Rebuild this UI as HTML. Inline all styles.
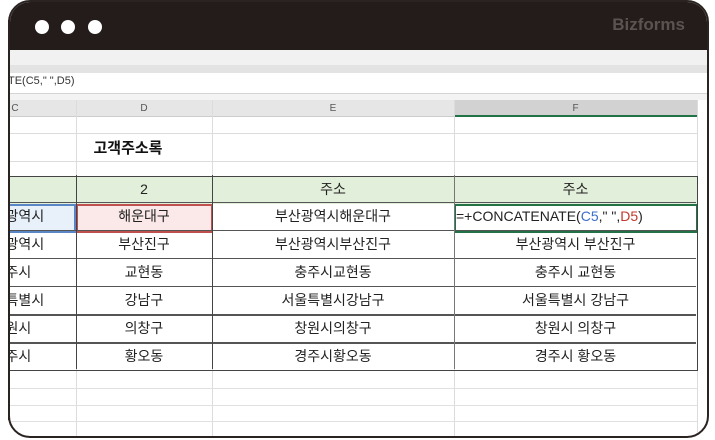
<!DOCTYPE html>
<html><head><meta charset="utf-8"><style>
*{margin:0;padding:0;box-sizing:border-box}
body{width:715px;height:440px;background:#fff;position:relative;overflow:hidden;font-family:"Liberation Sans","Noto Sans CJK KR",sans-serif}
.frame{position:absolute;left:8px;top:0;width:701px;height:438px;border:2px solid #2a2321;border-radius:22px;overflow:hidden;background:#fff}
.top{position:absolute;left:0;top:0;right:0;height:48px;background:#231c1a}
.dot{position:absolute;top:18px;width:14px;height:14px;border-radius:50%;background:#fff}
.logo{position:absolute;right:22px;top:13px;color:#5a5350;font-size:17px;font-weight:bold;letter-spacing:0px}
.abs{position:absolute}
.c{position:absolute;display:flex;align-items:center;justify-content:center;font-size:14px;color:#222;white-space:nowrap}
.h{position:absolute;height:1px;background:#555;left:8px;width:688px}.v{position:absolute;width:1px;background:#444;top:175px;height:194px}
</style></head><body>
<div class="frame">
<div class="top"><div class="dot" style="left:25px"></div><div class="dot" style="left:51px"></div><div class="dot" style="left:78px"></div><div class="logo">Bizforms</div></div>
<div class="abs" style="left:0;top:48px;right:0;height:15px;background:#f1f1f1"></div>
<div class="abs" style="left:0;top:63px;right:0;height:8px;background:#e3e3e3"></div>
<div class="abs" style="left:0;top:71px;right:0;height:21px;background:#fff;border-bottom:1px solid #d4d4d4"></div>
<div class="abs" style="left:-2px;top:73px;font-size:11px;color:#333">TE(C5," ",D5)</div>
<div class="abs" style="left:0;top:92px;right:0;height:6px;background:#f3f3f3"></div>
<div class="abs" style="left:0;top:98px;width:687px;height:17px;background:#e6e6e6;border-bottom:1px solid #ccc"></div>
<div class="abs" style="left:444px;top:98px;width:243px;height:17px;background:#d2d2d2;border-bottom:2px solid #217346"></div>
<div class="c" style="left:0;top:98px;width:10px;height:17px;font-size:10px;color:#555">C</div>
<div class="c" style="left:66px;top:98px;width:136px;height:17px;font-size:10px;color:#555">D</div>
<div class="c" style="left:202px;top:98px;width:242px;height:17px;font-size:10px;color:#555">E</div>
<div class="c" style="left:444px;top:98px;width:243px;height:17px;font-size:10px;color:#555">F</div>
<div class="abs" style="left:66px;top:98px;width:1px;height:340px;background:#dcdcdc"></div>
<div class="abs" style="left:202px;top:98px;width:1px;height:340px;background:#dcdcdc"></div>
<div class="abs" style="left:444px;top:98px;width:1px;height:340px;background:#dcdcdc"></div>
<div class="abs" style="left:687px;top:98px;width:1px;height:340px;background:#dcdcdc"></div>
<div class="abs" style="left:0;top:131px;width:687px;height:1px;background:#dcdcdc"></div>
<div class="abs" style="left:0;top:159px;width:687px;height:1px;background:#dcdcdc"></div>
<div class="abs" style="left:0;top:386px;width:687px;height:1px;background:#e0e0e0"></div>
<div class="abs" style="left:0;top:403px;width:687px;height:1px;background:#e0e0e0"></div>
<div class="abs" style="left:0;top:419px;width:687px;height:1px;background:#e0e0e0"></div>
<div class="c" style="left:68px;top:133px;width:100px;height:24px;font-weight:bold;font-size:15px;color:#111">고객주소록</div>
<div class="abs" style="left:0;top:175px;width:687px;height:27px;background:#e2efda"></div>
<div class="abs" style="left:0;top:202px;width:66px;height:29px;background:#e8f0fa;border:2px solid #5b86c5;border-left:none"></div>
<div class="abs" style="left:66px;top:202px;width:137px;height:29px;background:#fbe8e8;border:2px solid #c0504d"></div>
<div class="abs" style="left:444px;top:202px;width:244px;height:29px;border:2px solid #217346"></div>
<div class="abs" style="left:0;top:174px;width:688px;height:195px;border:1px solid #444;border-left:none;pointer-events:none"></div>
</div>
<div class="h" style="top:202px"></div><div class="h" style="top:230px"></div><div class="h" style="top:258px"></div><div class="h" style="top:286px"></div><div class="h" style="top:314px;height:2px"></div><div class="h" style="top:342px;height:2px"></div>
<div class="v" style="left:76px"></div><div class="v" style="left:212px"></div><div class="v" style="left:454px;background:#777"></div>
<div class="c" style="left:0;top:176px;width:12px;height:26px">)</div>
<div class="c" style="left:76px;top:176px;width:136px;height:26px">2</div>
<div class="c" style="left:212px;top:176px;width:242px;height:26px">주소</div>
<div class="c" style="left:454px;top:176px;width:243px;height:26px">주소</div>

<div class="c" style="left:-52px;top:202px;width:128px;height:28px">부산광역시</div>
<div class="c" style="left:76px;top:202px;width:136px;height:28px">해운대구</div>
<div class="c" style="left:212px;top:202px;width:242px;height:28px">부산광역시해운대구</div>
<div class="c" style="left:456px;top:202px;width:243px;height:28px;justify-content:flex-start">=+CONCATENATE(<span style="color:#3b6fc9">C5</span>," ",<span style="color:#c0392b">D5</span>)</div>

<div class="c" style="left:-52px;top:230px;width:128px;height:28px">부산광역시</div>
<div class="c" style="left:76px;top:230px;width:136px;height:28px">부산진구</div>
<div class="c" style="left:212px;top:230px;width:242px;height:28px">부산광역시부산진구</div>
<div class="c" style="left:454px;top:230px;width:243px;height:28px">부산광역시 부산진구</div>

<div class="c" style="left:-30px;top:258px;width:84px;height:28px">충주시</div>
<div class="c" style="left:76px;top:258px;width:136px;height:28px">교현동</div>
<div class="c" style="left:212px;top:258px;width:242px;height:28px">충주시교현동</div>
<div class="c" style="left:454px;top:258px;width:243px;height:28px">충주시 교현동</div>

<div class="c" style="left:-52px;top:286px;width:128px;height:28px">서울특별시</div>
<div class="c" style="left:76px;top:286px;width:136px;height:28px">강남구</div>
<div class="c" style="left:212px;top:286px;width:242px;height:28px">서울특별시강남구</div>
<div class="c" style="left:454px;top:286px;width:243px;height:28px">서울특별시 강남구</div>

<div class="c" style="left:-30px;top:314px;width:84px;height:28px">창원시</div>
<div class="c" style="left:76px;top:314px;width:136px;height:28px">의창구</div>
<div class="c" style="left:212px;top:314px;width:242px;height:28px">창원시의창구</div>
<div class="c" style="left:454px;top:314px;width:243px;height:28px">창원시 의창구</div>

<div class="c" style="left:-30px;top:342px;width:84px;height:27px">경주시</div>
<div class="c" style="left:76px;top:342px;width:136px;height:27px">황오동</div>
<div class="c" style="left:212px;top:342px;width:242px;height:27px">경주시황오동</div>
<div class="c" style="left:454px;top:342px;width:243px;height:27px">경주시 황오동</div>
<div class="abs" style="left:0;top:0;width:8px;height:440px;background:#fff"></div>
<div class="abs" style="left:8px;top:20px;width:2px;height:400px;background:#2a2321"></div>
</body></html>
